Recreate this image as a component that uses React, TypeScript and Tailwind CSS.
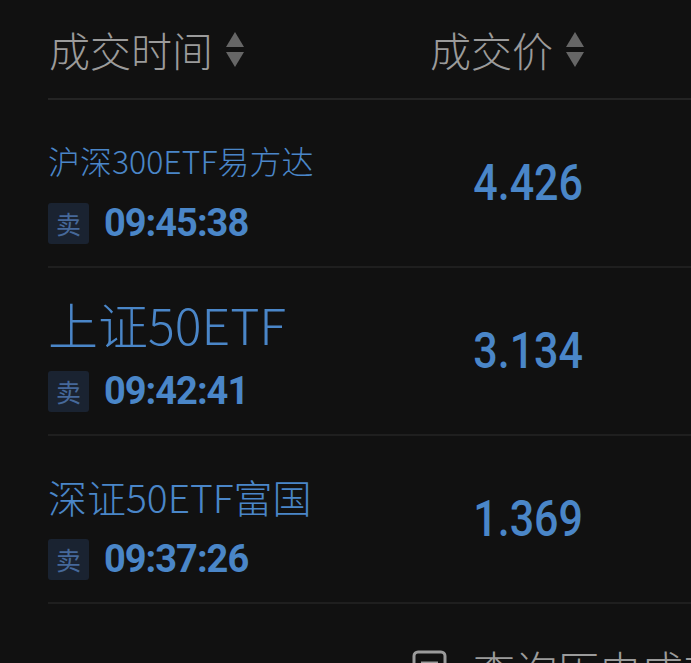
import React from "react";

const SortIcon = () => (
  <svg width="20" height="38" viewBox="0 0 20 38" className="ml-[12px] mt-[2px] shrink-0">
    <path d="M10 1 L19 16 L1 16 Z" fill="#666666" />
    <path d="M1 21 L19 21 L10 36 Z" fill="#666666" />
  </svg>
);

const rows = [
  { name: "沪深300ETF易方达", size: "text-[32px] pb-[2px]", time: "09:45:38", price: "4.426" },
  { name: "上证50ETF", size: "text-[50px] pb-[12px]", time: "09:42:41", price: "3.134" },
  { name: "深证50ETF富国", size: "text-[39px] pb-[2px]", time: "09:37:26", price: "1.369" },
];

const cjk = { fontFamily: '"Noto Sans CJK SC", "Noto Sans", sans-serif' };
const num = { fontFamily: 'Roboto, "Noto Sans", sans-serif' };

export default function App() {
  return (
    <div className="w-[691px] h-[663px] bg-[#111111] overflow-hidden" style={cjk}>
      <div className="pl-[48px]">
        <div className="h-[100px] flex items-center border-b-2 border-[#242424]">
          <div className="w-[382px] flex items-center pl-[1px]">
            <span className="text-[41px] font-light text-[#9b9b9b] leading-none">成交时间</span>
            <SortIcon />
          </div>
          <div className="flex items-center">
            <span className="text-[41px] font-light text-[#9b9b9b] leading-none">成交价</span>
            <SortIcon />
          </div>
        </div>
        {rows.map((r) => (
          <div key={r.time} className="h-[168px] flex border-b-2 border-[#1f1f1f]">
            <div className="w-[382px] flex flex-col pt-[20px]">
              <div className={`h-[82px] flex items-center text-[#4a86c8] font-light leading-none whitespace-nowrap ${r.size}`}>
                {r.name}
              </div>
              <div className="h-[42px] flex items-center">
                <div className="w-[41px] h-[41px] rounded-[3px] bg-[#1a2331] flex items-center justify-center text-[25px] text-[#46699a] leading-none">
                  卖
                </div>
                <span
                  className="ml-[15px] text-[38px] font-bold text-[#4a86c8] leading-none tracking-[-1px]"
                  style={num}
                >
                  {r.time}
                </span>
              </div>
            </div>
            <div className="w-[200px] flex items-center">
              <span
                className="block w-[153px] text-right text-[50px] font-medium text-[#4a86c8] leading-none scale-x-[0.86] origin-right"
                style={num}
              >
                {r.price}
              </span>
            </div>
          </div>
        ))}
        <div className="pt-[44px] pl-[364px] flex items-center">
          <svg width="35" height="38" viewBox="0 0 35 38" className="shrink-0">
            <rect x="2" y="2" width="31" height="34" rx="4" fill="none" stroke="#9b9b9b" strokeWidth="3" />
            <line x1="9" y1="13" x2="26" y2="13" stroke="#9b9b9b" strokeWidth="3" />
            <line x1="9" y1="21" x2="26" y2="21" stroke="#9b9b9b" strokeWidth="3" />
          </svg>
          <span className="ml-[26px] shrink-0 text-[42px] font-light text-[#9b9b9b] leading-none whitespace-nowrap">查询历史成交</span>
        </div>
      </div>
    </div>
  );
}
